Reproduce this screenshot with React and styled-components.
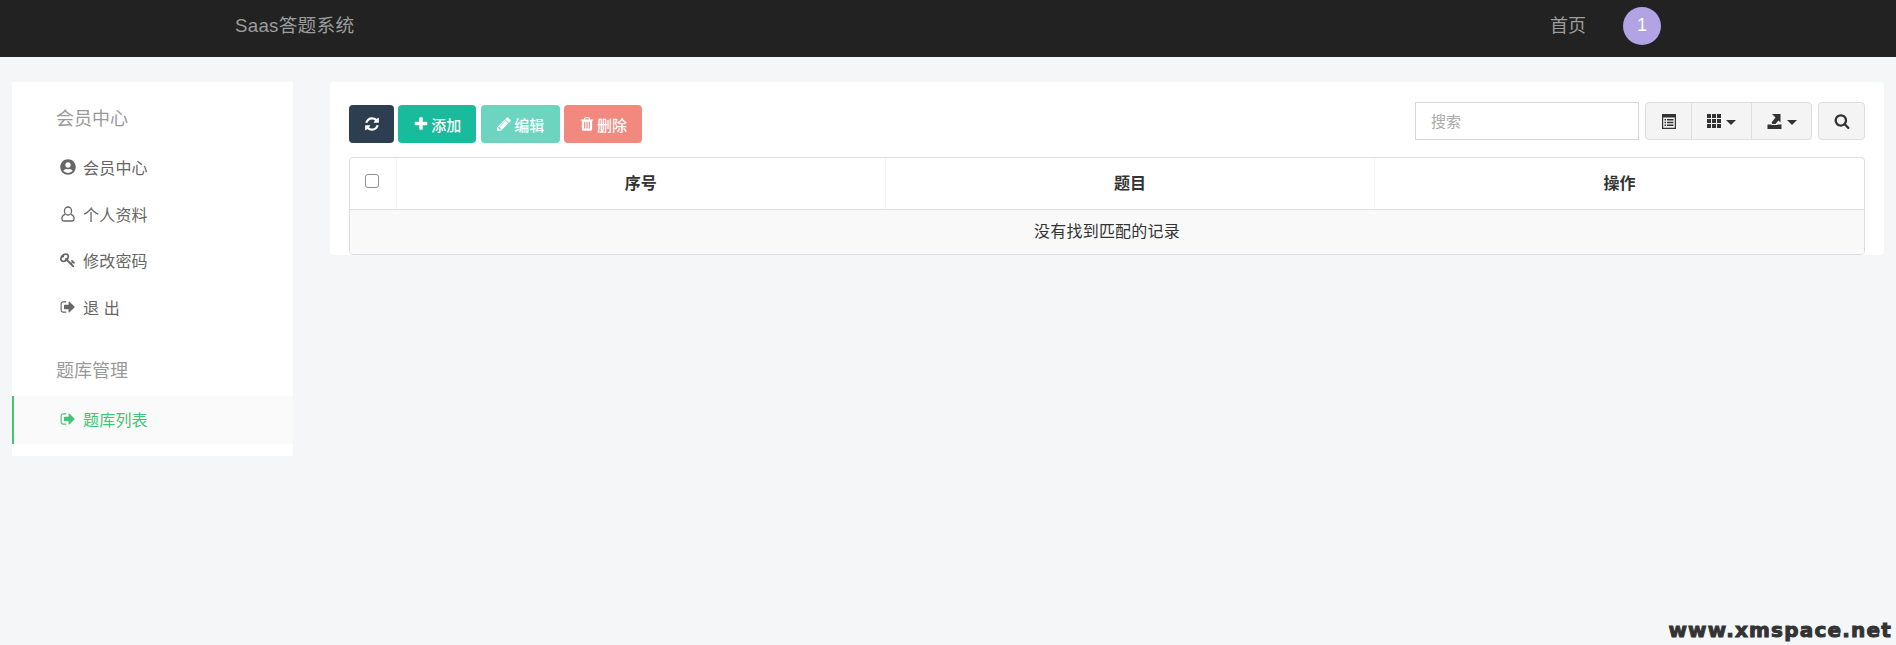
import React from "react";
import styled, { createGlobalStyle } from "styled-components";
import { FaUserCircle } from "react-icons/fa";

const Global = createGlobalStyle`
  html, body { margin: 0; padding: 0; }
  body {
    background: #f4f6f8;
    min-height: 645px;
    font-family: "Liberation Sans", "Noto Sans CJK SC", sans-serif;
    font-size: 16px;
    color: #333;
    overflow: hidden;
  }
`;

const Page = styled.div`
  position: relative;
  height: 645px;
`;
const Navbar = styled.header`
  height: 57px;
  box-sizing: border-box;
  background: #222;
  display: flex;
  align-items: center;
  padding: 0 0 10px 235px;
  color: #9d9d9d;
  font-size: 18px;
`;
const Brand = styled.div`
  flex: 1;
  font-size: 18.72px;
  letter-spacing: 0.25px;
`;
const NavLink = styled.a`
  color: #9d9d9d;
  margin-right: 37px;
`;
const Avatar = styled.div`
  width: 38px;
  height: 38px;
  border-radius: 50%;
  background: #b1a3e4;
  color: #fff;
  display: flex;
  align-items: center;
  justify-content: center;
  margin: 4px 235px 0 0;
`;
const Main = styled.main`
  display: flex;
  align-items: flex-start;
  gap: 37px;
  padding: 25px 12px 0;
`;
const Sidebar = styled.aside`
  width: 281px;
  height: 374px;
  background: #fff;
  flex: none;
  padding-top: 15px;
  box-sizing: border-box;
`;
const SectionTitle = styled.div`
  height: 44px;
  line-height: 44px;
  padding-left: 44px;
  font-size: 18px;
  color: #999;
  margin: ${(p) => p.$top || 0}px 0 3px;
`;
const MenuItem = styled.a`
  display: flex;
  align-items: center;
  box-sizing: border-box;
  height: ${(p) => (p.$active ? 48 : 46.5)}px;
  padding: 0 0 ${(p) => (p.$active ? 3 : 0)}px 46px;
  font-size: 16px;
  letter-spacing: 0.2px;
  color: ${(p) => (p.$active ? "#40c575" : "#666")};
  background: ${(p) => (p.$active ? "#fafafa" : "transparent")};
  border-left: 2px solid ${(p) => (p.$active ? "#40c575" : "transparent")};
  white-space: pre;
`;
const MenuIcon = styled.span`
  width: 23px;
  flex: none;
  display: flex;
  align-items: center;
  font-size: 16px;
`;
const Content = styled.section`
  flex: 1;
  height: 173px;
  background: #fff;
  border-radius: 4px;
  padding: 20px 19px 0;
  box-sizing: border-box;
`;
const Toolbar = styled.div`
  display: flex;
  align-items: flex-start;
  height: 55px;
`;
const LeftTools = styled.div`
  display: flex;
  gap: 4.33px;
  margin-top: 3px;
  flex: 1;
`;
const ActionButton = styled.button`
  height: 38px;
  width: ${(p) => p.$w}px;
  border: 0;
  border-radius: 4px;
  background: ${(p) => p.$bg};
  color: #fff;
  font: 500 15px "Liberation Sans", "Noto Sans CJK SC", sans-serif;
  display: flex;
  align-items: center;
  justify-content: center;
  gap: 2px;
  padding: 0;
`;
const SearchInput = styled.input`
  width: 224px;
  height: 38px;
  box-sizing: border-box;
  border: 1px solid #d2d6de;
  padding: 0 15px;
  font: 15px "Liberation Sans", "Noto Sans CJK SC", sans-serif;
  outline: none;
  &::placeholder { color: #aaa; }
`;
const Group = styled.div`
  display: flex;
  margin-left: ${(p) => p.$ml}px;
  height: 38px;
  box-sizing: border-box;
  border: 1px solid #dcdee2;
  border-radius: 4px;
  background: #f4f4f4;
  overflow: hidden;
`;
const GroupButton = styled.div`
  width: ${(p) => p.$w}px;
  display: flex;
  align-items: center;
  justify-content: center;
  gap: 5px;
  color: #333;
  font-size: 14px;
  box-sizing: border-box;
  & + & { border-left: 1px solid #dcdee2; }
`;
const Caret = styled.span`
  width: 0;
  height: 0;
  margin-top: 2px;
  border-top: 5px solid #333;
  border-left: 5px solid transparent;
  border-right: 5px solid transparent;
`;
const TableWrap = styled.div`
  border: 1px solid #dcdee2;
  border-radius: 4px;
  overflow: hidden;
  height: 98px;
  box-sizing: border-box;
`;
const Table = styled.table`
  width: 100%;
  height: 100%;
  border-collapse: collapse;
  table-layout: fixed;
`;
const Th = styled.th`
  height: 51px;
  padding: 0 0 2px;
  box-sizing: border-box;
  font-size: 16px;
  font-weight: 700;
  color: #333;
  text-align: center;
  border-bottom: 1px solid #dcdee2;
  & + & { border-left: 1px solid #f4f4f4; }
`;
const CheckCol = styled(Th)`
  width: 46px;
  padding: 0;
  vertical-align: top;
`;
const Box = styled.span`
  display: block;
  width: 12px;
  height: 12px;
  border: 1.5px solid #8f8f8f;
  border-radius: 3px;
  margin: 16px 0 0 15px;
`;
const EmptyCell = styled.td`
  background: #f9f9f9;
  text-align: center;
  font-size: 16px;
  letter-spacing: 0.2px;
  color: #333;
  padding: 0 0 4px;
`;
const Watermark = styled.div`
  position: absolute;
  right: 4px;
  bottom: 3px;
  font-family: "DejaVu Sans", sans-serif;
  font-weight: 700;
  font-size: 20px;
  letter-spacing: 1.2px;
  color: #333;
  -webkit-text-stroke: 1px #333;
`;

const Fa = ({ d, size = 16 }) => (
  <svg width={size} height={size} viewBox="0 0 1792 1792" fill="currentColor">
    <path d={d} />
  </svg>
);
const P = {
  refresh: "M1639 1056q0 5-1 7-64 268-268 434.500t-478 166.500q-146 0-282.500-55t-243.500-157l-129 129q-19 19-45 19t-45-19-19-45v-448q0-26 19-45t45-19h448q26 0 45 19t19 45-19 45l-137 137q71 66 161 102t187 36q134 0 250-65t186-179q11-17 53-117 8-23 30-23h192q13 0 22.500 9.500t9.500 22.500zm25-800v448q0 26-19 45t-45 19h-448q-26 0-45-19t-19-45 19-45l138-138q-148-137-349-137-134 0-250 65t-186 179q-11 17-53 117-8 23-30 23h-199q-13 0-22.500-9.500t-9.500-22.500v-7q65-268 270-434.500t480-166.500q146 0 284 55.500t245 156.500l130-129q19-19 45-19t45 19 19 45z",
  plus: "M1600 736v192q0 40-28 68t-68 28h-416v416q0 40-28 68t-68 28h-192q-40 0-68-28t-28-68v-416h-416q-40 0-68-28t-28-68v-192q0-40 28-68t68-28h416v-416q0-40 28-68t68-28h192q40 0 68 28t28 68v416h416q40 0 68 28t28 68z",
  pencil: "M491 1536l91-91-235-235-91 91v107h128v128h107zm523-928q0-22-22-22-10 0-17 7l-542 542q-7 7-7 17 0 22 22 22 10 0 17-7l542-542q7-7 7-17zm-54-192l416 416-832 832h-416v-416zm683 96q0 53-37 90l-166 166-416-416 166-165q36-38 90-38 53 0 91 38l235 234q37 39 37 91z",
  trash: "M704 1376v-704q0-14-9-23t-23-9h-64q-14 0-23 9t-9 23v704q0 14 9 23t23 9h64q14 0 23-9t9-23zm256 0v-704q0-14-9-23t-23-9h-64q-14 0-23 9t-9 23v704q0 14 9 23t23 9h64q14 0 23-9t9-23zm256 0v-704q0-14-9-23t-23-9h-64q-14 0-23 9t-9 23v704q0 14 9 23t23 9h64q14 0 23-9t9-23zm-544-992h448l-48-117q-7-9-17-11h-317q-10 2-17 11zm928 32v64q0 14-9 23t-23 9h-96v948q0 83-47 143.500t-113 60.500h-832q-66 0-113-58.500t-47-141.500v-952h-96q-14 0-23-9t-9-23v-64q0-14 9-23t23-9h309l70-167q15-37 54-63t79-26h320q40 0 79 26t54 63l70 167h309q14 0 23 9t9 23z",
  search: "M1216 832q0-185-131.500-316.500t-316.500-131.500-316.500 131.500-131.500 316.500 131.500 316.500 316.500 131.500 316.500-131.500 131.500-316.500zm512 832q0 52-38 90t-90 38q-54 0-90-38l-343-342q-179 124-399 124-143 0-273.500-55.500t-225-150-150-225-55.500-273.500 55.500-273.500 150-225 225-150 273.500-55.500 273.500 55.500 225 150 150 225 55.500 273.500q0 220-124 399l343 343q37 37 37 90z",
  key: "M832 512q0-80-56-136t-136-56-136 56-56 136q0 42 19 83-41-19-83-19-80 0-136 56t-56 136 56 136 136 56 136-56 56-136q0-42-19-83 41 19 83 19 80 0 136-56t56-136zm851 704q0 17-49 66t-66 49q-9 0-28.500-16t-36.500-33-38.500-40-24.500-26l-96 96 220 220q28 28 28 68 0 42-39 81t-81 39q-40 0-68-28l-671-671q-176 131-365 131-163 0-265.500-102.500t-102.500-265.500q0-160 95-313t248-248 313-95q163 0 265.500 102.500t102.500 265.500q0 189-131 365l355 355 96-96q-3-3-26-24.500t-40-38.500-33-36.500-16-28.500q0-17 49-66t66-49q13 0 23 10 6 6 46 44.500t82 79.500 86.500 86 73 78 28.500 41z",
  signOut: "M704 1440q0 4 1 20t.5 26.500-3 23.500-10 19.500-20.500 6.500h-320q-119 0-203.500-84.500t-84.500-203.500v-704q0-119 84.500-203.500t203.500-84.500h320q13 0 22.500 9.500t9.500 22.500q0 4 1 20t.5 26.500-3 23.500-10 19.500-20.500 6.500h-320q-66 0-113 47t-47 113v704q0 66 47 113t113 47h312l11.500 1 11.500 3 8 5.500 7 9 2 13.500zm928-544q0 26-19 45l-544 544q-19 19-45 19t-45-19-19-45v-288h-448q-26 0-45-19t-19-45v-384q0-26 19-45t45-19h448v-288q0-26 19-45t45-19 45 19l544 544q19 19 19 45z",
};

const UserOutline = () => (
  <svg width="16" height="16" viewBox="0 0 16 16" fill="none" stroke="currentColor" strokeWidth="1.3">
    <ellipse cx="8" cy="5" rx="3.6" ry="4" />
    <path d="M5 8.300C3 9 2 10.300 2 12.300v.9C2 14.300 2.700 15 3.800 15h8.400c1.100 0 1.800-.7 1.800-1.800v-.9c0-2-1-3.300-3-4" />
  </svg>
);
const ListAlt = () => (
  <svg width="14" height="15" viewBox="0 0 14 15" fill="currentColor">
    <path fillRule="evenodd" d="M0 0H14V15H0zM1.200 3.500V13.800H12.800V3.500z" />
    <path d="M2.500 5H4V6.500H2.500zM2.500 7.800H4V9.300H2.500zM2.500 10.600H4V12.100H2.500zM5 5H11.500V6.500H5zM5 7.800H11.500V9.300H5zM5 10.600H11.500V12.100H5z" />
  </svg>
);
const Grid = () => (
  <svg width="14" height="14" viewBox="0 0 14 14" fill="currentColor">
    {[0, 5, 10].map((y) =>
      [0, 5, 10].map((x) => <rect key={`${x}-${y}`} x={x} y={y} width="4" height="4" />)
    )}
  </svg>
);
const Export = () => (
  <svg width="15" height="15" viewBox="0 0 15 15" fill="currentColor">
    <path d="M0.500 10.500H4.500V11H10.500V10.500H14.500V15H0.500z" />
    <path d="M5 0H13.500V8.500L11.500 6.500L8.500 10H5.500L4.500 8.500L8.500 3.500z" />
  </svg>
);

export default function App() {
  return (
    <Page>
      <Global />
      <Navbar>
        <Brand>Saas答题系统</Brand>
        <NavLink>首页</NavLink>
        <Avatar>1</Avatar>
      </Navbar>
      <Main>
        <Sidebar>
          <SectionTitle>会员中心</SectionTitle>
          <MenuItem><MenuIcon><FaUserCircle /></MenuIcon>会员中心</MenuItem>
          <MenuItem><MenuIcon><UserOutline /></MenuIcon>个人资料</MenuItem>
          <MenuItem><MenuIcon><Fa d={P.key} /></MenuIcon>修改密码</MenuItem>
          <MenuItem><MenuIcon><Fa d={P.signOut} /></MenuIcon>退 出</MenuItem>
          <SectionTitle $top={19}>题库管理</SectionTitle>
          <MenuItem $active><MenuIcon><Fa d={P.signOut} /></MenuIcon>题库列表</MenuItem>
        </Sidebar>
        <Content>
          <Toolbar>
            <LeftTools>
              <ActionButton $w={45} $bg="#2c3e50"><Fa d={P.refresh} /></ActionButton>
              <ActionButton $w={78} $bg="#18bc9c"><Fa d={P.plus} />添加</ActionButton>
              <ActionButton $w={79} $bg="#6dd4bf"><Fa d={P.pencil} />编辑</ActionButton>
              <ActionButton $w={78} $bg="#f1897f"><Fa d={P.trash} />删除</ActionButton>
            </LeftTools>
            <SearchInput placeholder="搜索" />
            <Group $ml={6}>
              <GroupButton $w={45}><ListAlt /></GroupButton>
              <GroupButton $w={60}><Grid /><Caret /></GroupButton>
              <GroupButton $w={60}><Export /><Caret /></GroupButton>
            </Group>
            <Group $ml={6}>
              <GroupButton $w={45}><Fa d={P.search} /></GroupButton>
            </Group>
          </Toolbar>
          <TableWrap>
            <Table>
              <thead>
                <tr>
                  <CheckCol><Box /></CheckCol>
                  <Th>序号</Th>
                  <Th>题目</Th>
                  <Th>操作</Th>
                </tr>
              </thead>
              <tbody>
                <tr><EmptyCell colSpan={4}>没有找到匹配的记录</EmptyCell></tr>
              </tbody>
            </Table>
          </TableWrap>
        </Content>
      </Main>
      <Watermark>www.xmspace.net</Watermark>
    </Page>
  );
}
